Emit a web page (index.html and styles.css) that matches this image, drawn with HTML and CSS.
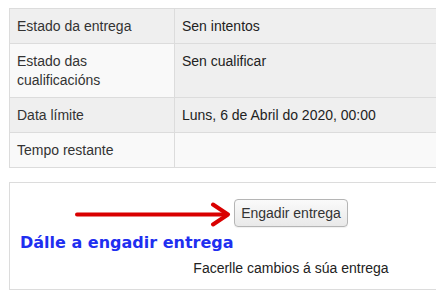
FILE: index.html
```html
<!DOCTYPE html>
<html>
<head>
<meta charset="utf-8">
<link rel="stylesheet" href="styles.css">
</head>
<body>
<div class="frame">
<div class="page">
  <table class="status">
    <tr class="row-a">
      <th class="label">Estado da entrega</th>
      <td class="value">Sen intentos</td>
    </tr>
    <tr class="row-b">
      <th class="label">Estado das cualificacións</th>
      <td class="value grey">Sen cualificar</td>
    </tr>
    <tr class="row-a">
      <th class="label">Data límite</th>
      <td class="value">Luns, 6 de Abril do 2020, 00:00</td>
    </tr>
    <tr class="row-b">
      <th class="label">Tempo restante</th>
      <td class="value"></td>
    </tr>
  </table>

  <div class="submit-box">
    <button class="btn">Engadir entrega</button>
    <p class="caption">Facerlle cambios á súa entrega</p>
    <svg class="arrow" width="160" height="26" viewBox="0 0 160 26">
      <path d="M2 12.5 H151" stroke="#d90000" stroke-width="4" stroke-linecap="round" fill="none"/>
      <path d="M138 2.5 L153 12.5 L138 22.5" stroke="#d90000" stroke-width="4" stroke-linecap="round" stroke-linejoin="round" fill="none"/>
    </svg>
    <span class="note">Dálle a engadir entrega</span>
  </div>
</div>
</div>
</body>
</html>
```

FILE: styles.css
```css
html, body {
  margin: 0;
  padding: 0;
  overflow: hidden;
  background: #fff;
}
.frame {
  width: 100%;
  height: 302px;
  overflow: hidden;
}
.page {
  width: 564px;
  padding: 8px 0 0 9px;
  font-family: "Liberation Sans", Arial, sans-serif;
  font-size: 14px;
  color: #222;
}
.status {
  width: 564px;
  border-collapse: collapse;
  table-layout: fixed;
}
.status th, .status td {
  border: 1px solid #dcdcdc;
  padding: 8px 8px 7px 7px;
  line-height: 19px;
  text-align: left;
  vertical-align: top;
  font-weight: normal;
}
.status th.label {
  width: 149px;
  color: #333;
}
.row-a th, .row-a td {
  background: #efefef;
}
.row-b th, .row-b td {
  background: #f9f9f9;
}
.row-b td.grey {
  background: #efefef;
}
.submit-box {
  position: relative;
  margin-top: 14px;
  border: 1px solid #dcdcdc;
  padding: 16px 0 11px;
  text-align: center;
}
.btn {
  font-family: "Liberation Sans", Arial, sans-serif;
  font-size: 14px;
  color: #333;
  height: 28px;
  padding: 0 6px;
  border: 1px solid #b5b5b5;
  border-radius: 4px;
  background: linear-gradient(#fafafa, #e9e9e9);
  box-shadow: 0 1px 1px rgba(0,0,0,0.06);
}
.caption {
  margin: 31px 0 0;
  line-height: 20px;
  color: #222;
}
.arrow {
  position: absolute;
  left: 65px;
  top: 19px;
}
.note {
  position: absolute;
  left: 10px;
  top: 50px;
  font-family: "DejaVu Sans", Verdana, sans-serif;
  font-weight: bold;
  font-size: 16px;
  color: #1f2ff0;
  white-space: nowrap;
}
```
